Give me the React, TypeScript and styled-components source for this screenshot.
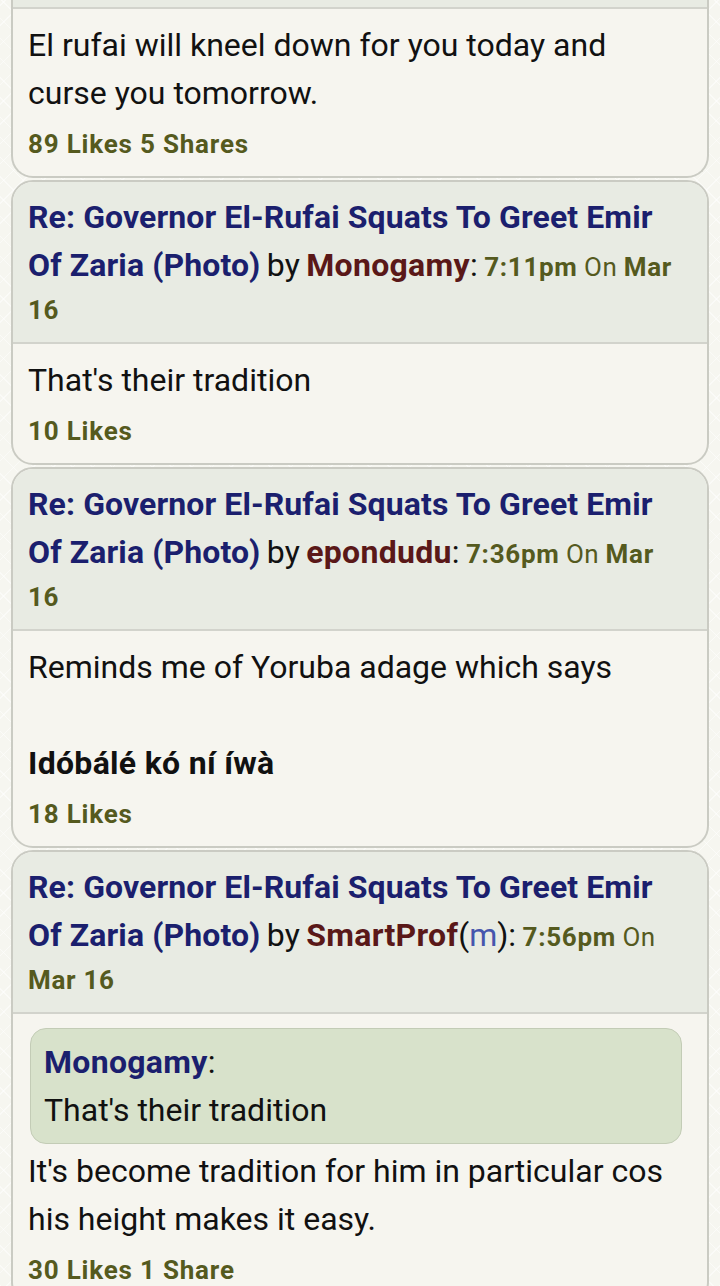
import React from "react";
import styled, { createGlobalStyle } from "styled-components";

const Global = createGlobalStyle`
  html, body { margin: 0; padding: 0; }
  body {
    background-color: #f6f6f0;
    background-image:
      repeating-linear-gradient(45deg, rgba(255,255,255,0.5) 0 1px, transparent 1px 14px),
      repeating-linear-gradient(-45deg, rgba(255,255,255,0.5) 0 1px, transparent 1px 14px);
    font-family: Roboto, "Noto Sans", Arial, sans-serif;
    color: #111;
  }
`;

const Feed = styled.div`
  display: flex;
  flex-direction: column;
  gap: 2px;
  padding: 0 11px;
  height: 1286px;
  overflow: hidden;
`;

const Card = styled.article<{ $cut?: boolean }>`
  border: 2px solid #cacbc3;
  border-radius: ${(p) => (p.$cut ? "0 0 22px 22px" : "22px")};
  border-top-width: ${(p) => (p.$cut ? "0" : "2px")};
  overflow: hidden;
  background: #f6f5ef;
  flex-shrink: 0;
`;

const Header = styled.header<{ $stub?: boolean }>`
  background: #e8ebe3;
  border-bottom: 2px solid #d2d3cc;
  padding: ${(p) => (p.$stub ? "7px 15px 0" : "11px 15px 10px")};
  font-size: 26px;
  line-height: 43px;
`;

const Title = styled.span`
  font-size: 32px;
  line-height: 48px;
  font-weight: 700;
  letter-spacing: 0.1px;
  color: #1b1f6e;
`;

const By = styled.span`
  font-size: 32px;
  line-height: 48px;
  color: #111;
`;

const Author = styled.span`
  font-size: 32px;
  line-height: 48px;
  font-weight: 700;
  letter-spacing: 0.3px;
  color: #5a1818;
`;

const Gender = styled.span`
  font-size: 32px;
  line-height: 48px;
  color: #111;
  & > em {
    font-style: normal;
    color: #4656ad;
  }
`;

const Stamp = styled.span<{ $bold?: boolean }>`
  color: #555a1e;
  font-weight: ${(p) => (p.$bold ? 700 : 400)};
  letter-spacing: ${(p) => (p.$bold ? "0.7px" : "0.5px")};
`;

const Body = styled.div`
  padding: 12px 15px 10px;
`;

const Text = styled.div<{ $bold?: boolean }>`
  font-size: 32px;
  line-height: 48px;
  font-weight: ${(p) => (p.$bold ? 700 : 400)};
  letter-spacing: ${(p) => (p.$bold ? "0.3px" : "0")};
  color: #111;
`;

const Gap = styled.div`
  height: 48px;
`;

const Meta = styled.div`
  margin-top: 6px;
  font-size: 26px;
  line-height: 43px;
  font-weight: 700;
  letter-spacing: 0.8px;
  color: #555a1e;
`;

const Quote = styled.blockquote`
  margin: 2px 10px 3px 2px;
  padding: 9px 13px 9px;
  background: #d8e2cb;
  border: 1px solid #c3ccb6;
  border-radius: 16px;
`;

const QuoteAuthor = styled.div`
  font-size: 32px;
  line-height: 48px;
  color: #111;
  & > b {
    color: #1b1f6e;
    letter-spacing: 0.3px;
  }
`;

type Post = {
  author: string;
  gender?: string;
  time: string;
  date: string;
  lines: React.ReactNode;
  meta: string;
};

const TITLE = "Re: Governor El-Rufai Squats To Greet Emir Of Zaria (Photo)";

const posts: Post[] = [
  {
    author: "Monogamy",
    time: "7:11pm",
    date: "Mar 16",
    lines: <Text>That's their tradition</Text>,
    meta: "10 Likes",
  },
  {
    author: "epondudu",
    time: "7:36pm",
    date: "Mar 16",
    lines: (
      <>
        <Text>Reminds me of Yoruba adage which says</Text>
        <Gap />
        <Text $bold>Idóbálé kó ní íwà</Text>
      </>
    ),
    meta: "18 Likes",
  },
  {
    author: "SmartProf",
    gender: "m",
    time: "7:56pm",
    date: "Mar 16",
    lines: (
      <>
        <Quote>
          <QuoteAuthor>
            <b>Monogamy</b>:
          </QuoteAuthor>
          <Text>That's their tradition</Text>
        </Quote>
        <Text>
          It's become tradition for him in particular cos his height makes it
          easy.
        </Text>
      </>
    ),
    meta: "30 Likes 1 Share",
  },
];

export default function App() {
  return (
    <>
      <Global />
      <Feed>
        <Card $cut>
          <Header $stub />
          <Body>
            <Text>El rufai will kneel down for you today and curse you tomorrow.</Text>
            <Meta>89 Likes 5 Shares</Meta>
          </Body>
        </Card>
        {posts.map((p) => (
          <Card key={p.author}>
            <Header>
              <Title>{TITLE}</Title> <By>by</By> <Author>{p.author}</Author>
              {p.gender ? (
                <Gender>
                  (<em>{p.gender}</em>)
                </Gender>
              ) : null}
              <By>:</By> <Stamp $bold>{p.time}</Stamp> <Stamp>On</Stamp>{" "}
              <Stamp $bold>{p.date}</Stamp>
            </Header>
            <Body>
              {p.lines}
              <Meta>{p.meta}</Meta>
            </Body>
          </Card>
        ))}
      </Feed>
    </>
  );
}
